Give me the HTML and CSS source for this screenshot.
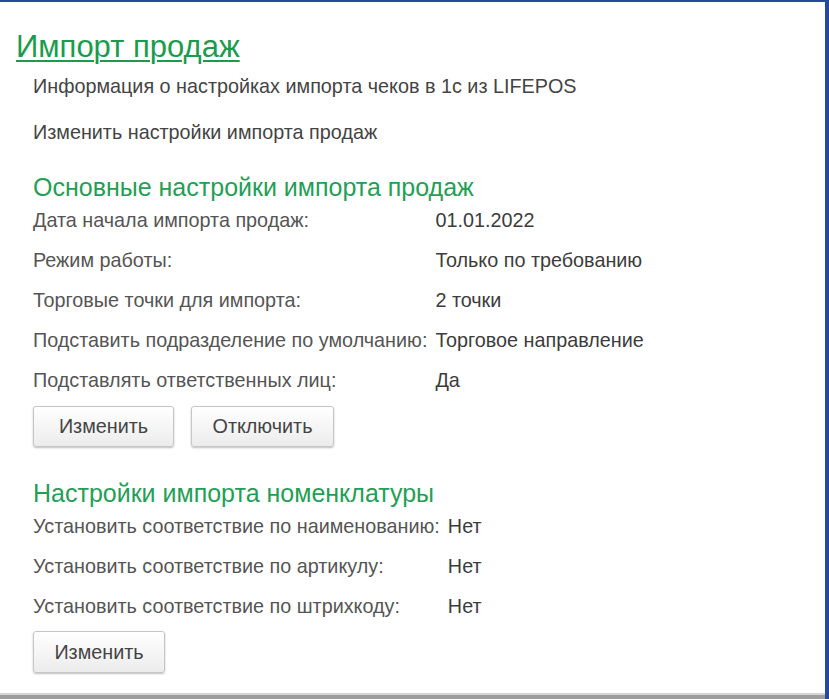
FILE: index.html
```html
<!DOCTYPE html>
<html lang="ru">
<head>
    <meta charset="UTF-8">
    <meta name="viewport" content="width=device-width, initial-scale=1.0">
    <title>Импорт продаж</title>
    <link rel="stylesheet" href="styles.css">
</head>
<body>

    <div class="window">
        <div class="form">
            <h1 class="title">Импорт продаж</h1>
            <div class="info">Информация о настройках импорта чеков в 1с из LIFEPOS</div>
            <div class="link">Изменить настройки импорта продаж</div>

            <h2 class="group-title">Основные настройки импорта продаж</h2>
            <div class="fields">
                <div class="label">Дата начала импорта продаж:</div>
                <div class="value">01.01.2022</div>
                <div class="label">Режим работы:</div>
                <div class="value">Только по требованию</div>
                <div class="label">Торговые точки для импорта:</div>
                <div class="value">2 точки</div>
                <div class="label">Подставить подразделение по умолчанию:</div>
                <div class="value">Торговое направление</div>
                <div class="label">Подставлять ответственных лиц:</div>
                <div class="value">Да</div>
            </div>
            <div class="buttons">
                <button class="button btn-edit">Изменить</button>
                <button class="button btn-off">Отключить</button>
            </div>

            <h2 class="group-title group-second">Настройки импорта номенклатуры</h2>
            <div class="fields">
                <div class="label">Установить соответствие по наименованию:</div>
                <div class="value">Нет</div>
                <div class="label">Установить соответствие по артикулу:</div>
                <div class="value">Нет</div>
                <div class="label">Установить соответствие по штрихкоду:</div>
                <div class="value">Нет</div>
            </div>
            <div class="buttons buttons-last">
                <button class="button btn-edit-small">Изменить</button>
            </div>
        </div>
    </div>

</body>
</html>
```

FILE: styles.css
```css
body {
    margin: 0;
    padding: 0;
    background: #fff;
    font-family: "Liberation Sans", Arial, sans-serif;
    color: #444;
}
.window {
    height: 699px;
    box-sizing: border-box;
    border-top: 2px solid #27499b;
    border-right: 4px solid #27499b;
}
.form {
    height: 100%;
    box-sizing: border-box;
    padding: 28px 0 0 33px;
    border-bottom: 4px solid #9d9d9d;
    box-shadow: inset 0 -2px 0 #d6d6d6;
}
.title {
    margin: 0 0 0 -17px;
    font-size: 31px;
    line-height: 34px;
    font-weight: normal;
    color: #1b9c4c;
    text-decoration: underline;
    text-decoration-thickness: 2px;
    text-underline-offset: 3px;
}
.info {
    margin-top: 10px;
    font-size: 19.8px;
    line-height: 24px;
}
.link {
    margin-top: 22px;
    font-size: 19.8px;
    line-height: 24px;
}
.group-title {
    margin: 30px 0 0 0;
    font-size: 25px;
    line-height: 26px;
    font-weight: normal;
    color: #1fa055;
}
.group-second {
    margin-top: 33px;
}
.fields {
    display: grid;
    grid-template-columns: max-content 1fr;
    column-gap: 8px;
    font-size: 19.8px;
}
.label, .value {
    line-height: 40px;
}
.label {
    color: #555;
}
.value {
    color: #3c3c3c;
}
.buttons {
    display: flex;
    gap: 17px;
    margin-top: 6px;
}
.buttons-last {
    margin-top: 5px;
}
.button {
    height: 41px;
    padding: 0;
    font-family: "Liberation Sans", Arial, sans-serif;
    font-size: 19.8px;
    color: #444;
    background: linear-gradient(#ffffff, #ececec);
    border: 1px solid #c6c6c6;
    border-radius: 3px;
    box-shadow: 0 1px 2px rgba(0, 0, 0, 0.25);
}
.btn-edit {
    width: 141px;
}
.btn-off {
    width: 143px;
}
.btn-edit-small {
    width: 132px;
    height: 42px;
}
```
